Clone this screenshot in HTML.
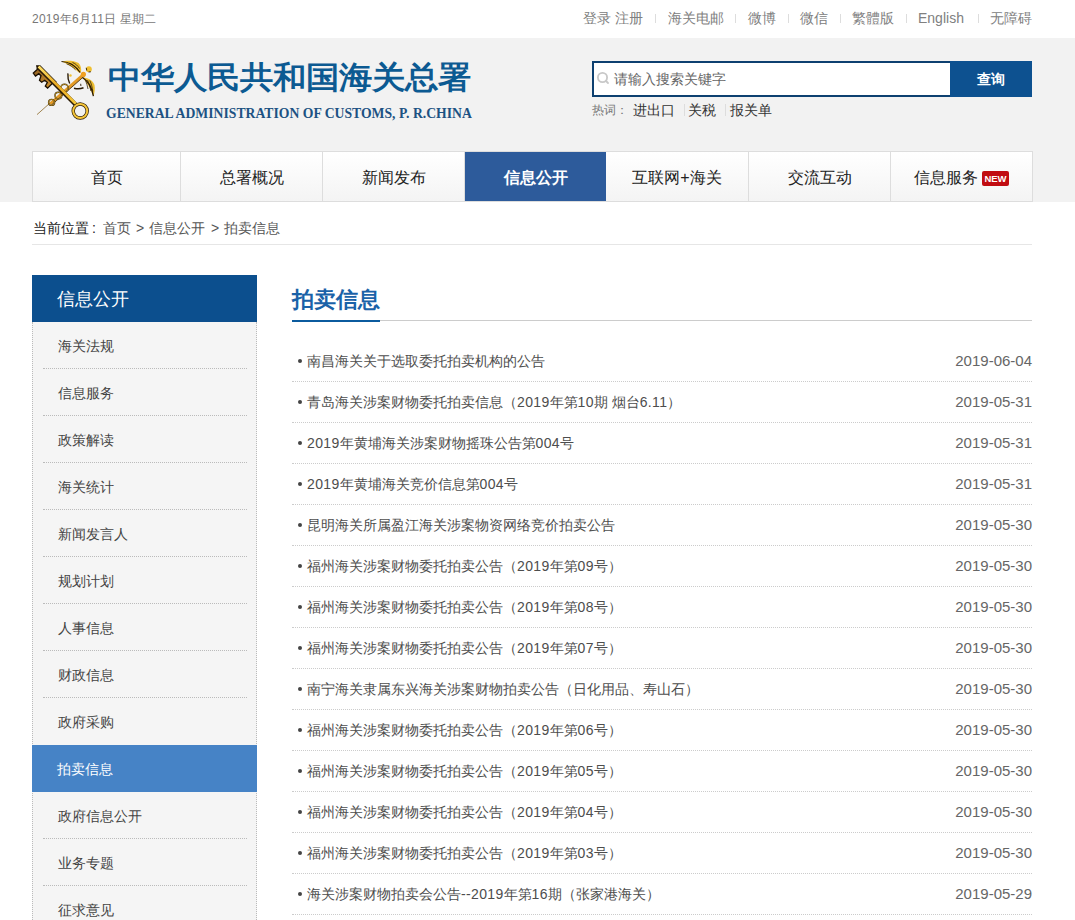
<!DOCTYPE html>
<html><head><meta charset="utf-8">
<style>
*{margin:0;padding:0;box-sizing:border-box}
html,body{width:1075px;height:920px;overflow:hidden;background:#fff}
body{font-family:"Liberation Sans",sans-serif;color:#333;position:relative}
.abs{position:absolute;white-space:nowrap}
#topbar{position:absolute;left:0;top:0;width:1075px;height:38px;background:#fff}
#date{left:32px;top:11px;letter-spacing:.25px;font-size:12px;color:#777;line-height:16px}
#toplinks{top:9px;font-size:14px;color:#808080;line-height:18px}
#toplinks span{position:absolute;white-space:nowrap}
#toplinks i{position:absolute;top:5px;width:1px;height:9px;background:#ddd}
#header{position:absolute;left:0;top:38px;width:1075px;height:164px;background:#f2f2f2}
#logo-cn{left:108px;top:20px;font-size:33px;font-weight:bold;color:#0c5a92;line-height:40px;letter-spacing:0px;transform-origin:0 23px;transform:scaleY(.93)}
#logo-en{left:106px;top:67px;font-family:"Liberation Serif",serif;font-weight:bold;font-size:15px;color:#1d5283;line-height:16px;transform-origin:0 0;transform:scaleX(0.9125)}
#search{left:592px;top:23px;width:358px;height:36px;border:2px solid #0d4070;border-right:none;background:#fff}
#btn{left:950px;top:23px;width:82px;height:36px;background:#0d5190;color:#fff;font-size:14px;font-weight:600;line-height:36px;text-align:center}
#ph{left:614px;top:32px;font-size:14px;color:#666;line-height:18px}
#hot{left:592px;top:64px;font-size:12px;color:#777;line-height:16px}
.hw{top:63px;font-size:14px;color:#333;line-height:18px}
#nav{position:absolute;left:32px;top:151px;width:1001px;height:51px;border:1px solid #ddd;background:linear-gradient(#fff,#f4f4f4)}
.ni{position:absolute;top:0;height:49px;line-height:51px;text-align:center;font-size:16px;color:#222}
.nd{position:absolute;top:0;width:1px;height:49px;background:#ddd}
.ni.on{background:#2d5b9b;color:#fff;font-weight:bold}
.crumb{top:219px;font-size:14px;color:#555;line-height:18px}
#crumbline{position:absolute;left:32px;top:244px;width:1000px;height:1px;background:#e6e6e6}
#side{position:absolute;left:32px;top:275px;width:225px;height:645px}
#sidehd{position:absolute;left:0;top:0;width:225px;height:47px;background:#0c4f8e;color:#fff;font-size:18px;line-height:49px;padding-left:25px}
#sidebody{position:absolute;left:0;top:47px;width:225px;height:700px;background:#f5f5f5;border-left:1px dotted #bbb;border-right:1px dotted #bbb}
.si{position:absolute;left:0;width:225px;height:47px;font-size:14px;color:#444;line-height:49px;padding-left:26px}
.si b{position:absolute;left:11px;right:10px;bottom:0;border-top:1px dotted #bbb;font-weight:normal}
.si.on{background:#4683c6;color:#fff;padding-left:25px}
#ctitle{left:292px;top:285px;font-size:22px;font-weight:bold;color:#1a62a8;line-height:30px}
#cline{position:absolute;left:292px;top:320px;width:740px;height:1px;background:#ccc}
#cbar{position:absolute;left:292px;top:320px;width:88px;height:2px;background:#0b5b9e}
.li{position:absolute;left:292px;width:740px;height:41px}
.li .t{position:absolute;left:15px;top:10px;font-size:14px;color:#4d4d4d;line-height:20px;white-space:nowrap}
.li .dot{position:absolute;left:6px;top:18px;width:4px;height:4px;border-radius:2px;background:#444}
.li .d{position:absolute;right:0;top:10px;font-size:15px;color:#666;line-height:20px}
.li .t s{text-decoration:none;letter-spacing:.35px}
.li .sep{position:absolute;left:0;right:0;bottom:0;border-top:1px dotted #ccc}
#new{left:949px;top:19px;width:27px;height:15px;background:#c10d12;border-radius:2px;color:#fff;font-size:9.5px;font-weight:bold;line-height:15px;text-align:center;letter-spacing:0}
#hotsep{}
</style></head><body>
<div id="topbar">
  <div id="date" class="abs">2019年6月11日 星期二</div>
  <div id="toplinks" class="abs" style="left:0;width:1075px;height:20px">
    <span style="left:583px">登录 注册</span><i style="left:655px"></i>
    <span style="left:668px">海关电邮</span><i style="left:735px"></i>
    <span style="left:748px">微博</span><i style="left:788px"></i>
    <span style="left:800px">微信</span><i style="left:840px"></i>
    <span style="left:852px">繁體版</span><i style="left:906px"></i>
    <span style="left:918px">English</span><i style="left:978px"></i>
    <span style="left:990px">无障碍</span>
  </div>
</div>
<div id="header">
  <svg class="abs" style="left:28px;top:18px" width="70" height="70" viewBox="28 56 70 70">
   <defs><linearGradient id="gd" x1="0" y1="0" x2="1" y2="1"><stop offset="0" stop-color="#ffe066"/><stop offset=".5" stop-color="#e8a820"/><stop offset="1" stop-color="#f5c93a"/></linearGradient>
   <linearGradient id="gb" x1="0" y1="0" x2="1" y2="1"><stop offset="0" stop-color="#8a5a20"/><stop offset="1" stop-color="#d89a30"/></linearGradient></defs>
   <line x1="37" y1="114.6" x2="50" y2="103" stroke="#a08450" stroke-width="1"/>
   <path d="M49,103 L83,73 L85,75.5 L51.5,105Z" fill="#e39a25"/>
   <path d="M51.5,105 L85,75.5" stroke="#3a2608" stroke-width=".8"/>
   <circle cx="51.6" cy="102.4" r="3" fill="none" stroke="#3a2608" stroke-width="1.4"/>
   <circle cx="51.6" cy="102.4" r="3" fill="none" stroke="#f0c030" stroke-width=".6"/>
   <circle cx="58.4" cy="95.6" r="3.4" fill="none" stroke="#3a2608" stroke-width="1.4"/>
   <circle cx="58.4" cy="95.6" r="3.4" fill="none" stroke="#f0c030" stroke-width=".6"/>
   <circle cx="64.5" cy="88" r="3.8" fill="none" stroke="#3a2608" stroke-width="1.4"/>
   <circle cx="64.5" cy="88" r="3.8" fill="none" stroke="#f0c030" stroke-width=".6"/>
   <path d="M67.9,73.4 Q67.5,79 69.7,83.5" fill="none" stroke="#2a1a05" stroke-width="1.4"/>
   <circle cx="70.5" cy="75.5" r="1.2" fill="#f0c030"/>
   <path d="M74,88.2 Q79,89.5 83.5,87.8" fill="none" stroke="#2a1a05" stroke-width="1.5"/>
   <path d="M80.7,83.8 L80.9,86" stroke="#2a1a05" stroke-width=".9"/>
   <path d="M61.5,61.5 C66,60.5 73,60 78.5,63 C81,65.5 81.5,69 81,72 L79.5,73 C76,69.5 70,65 61.5,61.5Z" fill="#ecbd30"/>
   <path d="M61.5,61.5 C68,61.8 75,65 80.2,72.5" fill="none" stroke="#2a1a05" stroke-width="1.2"/>
   <path d="M66.5,63.8 C70,65 73,67 75.5,69.8 M69.5,63 C73,64.5 76,67 78,70 M72.5,62.5 C75.5,63.5 78,66 79.5,68.5" fill="none" stroke="#2a1a05" stroke-width=".75"/>
   <path d="M82.5,77.5 C87,77.5 92.5,79.5 94.5,85 C95.3,89 94.5,93 93.4,96.2 C91.5,91 88.5,85 82.5,77.5Z" fill="#ecbd30"/>
   <path d="M82.5,77.5 C88,81 92,88 93.4,96.2" fill="none" stroke="#2a1a05" stroke-width="1.3"/>
   <path d="M85.5,80.3 C86.5,83 87.5,86 88,89 M87.5,80 C89,83 90.2,87 90.8,91 M89.8,80.5 C91.3,83.5 92.3,87.5 92.8,91.5" fill="none" stroke="#2a1a05" stroke-width=".75"/>
   <circle cx="88.9" cy="69.2" r="2.9" fill="#f0c030"/>
   <path d="M86.2,67.8 L86.8,70.5 M88.5,72 L90.8,71.8" stroke="#2a1a05" stroke-width=".9"/>
   <circle cx="83.4" cy="74.3" r="2.6" fill="#f0a020"/>
   <path d="M36.8,65.9 L37.5,69.2 L33.3,73.1 L35.5,76 L38.8,73.7 L41,75.7 L39.5,80.3 L41.7,82.2 L44.7,80.3 L47.3,82.5 L45.3,86.1 L47.6,88.1 L52.2,83.5 L56,82 L40,66 Z" fill="url(#gb)" stroke="#1a0f02" stroke-width="1.3"/>
   <line x1="38" y1="67" x2="75.5" y2="104.5" stroke="#2a1a05" stroke-width="4.2"/>
   <line x1="38.6" y1="66.5" x2="76" y2="104" stroke="url(#gd)" stroke-width="2.6"/>
   <circle cx="80.2" cy="111" r="7" fill="none" stroke="#2a1a05" stroke-width="3.4"/>
   <circle cx="80.2" cy="111" r="7" fill="none" stroke="#f4c53a" stroke-width="2"/>
  </svg>
  <div id="logo-cn" class="abs">中华人民共和国海关总署</div>
  <div id="logo-en" class="abs">GENERAL ADMINISTRATION OF CUSTOMS, P. R.CHINA</div>
  <div id="search" class="abs"></div>
  <div id="ph" class="abs">请输入搜索关键字</div>
  <svg class="abs" style="left:596px;top:33px" width="14" height="14" viewBox="0 0 14 14"><circle cx="6.5" cy="6.5" r="4.6" fill="none" stroke="#c8c8c8" stroke-width="1.8"/><line x1="10" y1="10" x2="12" y2="12" stroke="#c8c8c8" stroke-width="1.8" stroke-linecap="round"/></svg>
  <div id="btn" class="abs">查询</div>
  <div id="hot" class="abs">热词：</div>
  <div class="abs hw" style="left:633px">进出口</div>
  <div class="abs" style="left:684px;top:66px;width:1px;height:12px;background:#ddd"></div>
  <div class="abs hw" style="left:688px">关税</div>
  <div class="abs" style="left:725px;top:66px;width:1px;height:12px;background:#ddd"></div>
  <div class="abs hw" style="left:730px">报关单</div>
</div>
<div id="nav">
  <div class="ni" style="left:0;width:147px">首页</div>
  <i class="nd" style="left:147px"></i>
  <div class="ni" style="left:148px;width:141px">总署概况</div>
  <i class="nd" style="left:289px"></i>
  <div class="ni" style="left:290px;width:141px">新闻发布</div>
  <i class="nd" style="left:431px"></i>
  <div class="ni on" style="left:432px;width:141px">信息公开</div>
  <div class="ni" style="left:573px;width:142px">互联网+海关</div>
  <i class="nd" style="left:715px"></i>
  <div class="ni" style="left:716px;width:141px">交流互动</div>
  <i class="nd" style="left:857px"></i>
  <div class="abs" style="left:881px;top:0;font-size:16px;line-height:51px;color:#222">信息服务</div>
  <div class="abs" id="new">NEW</div>
</div>
<div class="abs crumb" style="left:33px;color:#222">当前位置</div>
<div class="abs crumb" style="left:92px;color:#222">:</div>
<div class="abs crumb" style="left:103px">首页</div>
<div class="abs crumb" style="left:136px">&gt;</div>
<div class="abs crumb" style="left:149px">信息公开</div>
<div class="abs crumb" style="left:211px">&gt;</div>
<div class="abs crumb" style="left:224px">拍卖信息</div>
<div id="crumbline"></div>
<div id="side">
  <div id="sidehd">信息公开</div>
  <div id="sidebody"></div>
  <div class="si" style="top:47px">海关法规<b></b></div>
  <div class="si" style="top:94px">信息服务<b></b></div>
  <div class="si" style="top:141px">政策解读<b></b></div>
  <div class="si" style="top:188px">海关统计<b></b></div>
  <div class="si" style="top:235px">新闻发言人<b></b></div>
  <div class="si" style="top:282px">规划计划<b></b></div>
  <div class="si" style="top:329px">人事信息<b></b></div>
  <div class="si" style="top:376px">财政信息<b></b></div>
  <div class="si" style="top:423px">政府采购</div>
  <div class="si on" style="top:470px">拍卖信息</div>
  <div class="si" style="top:517px">政府信息公开<b></b></div>
  <div class="si" style="top:564px">业务专题<b></b></div>
  <div class="si" style="top:611px">征求意见<b></b></div>
</div>
<div id="ctitle" class="abs">拍卖信息</div>
<div id="cline"></div><div id="cbar"></div>
<div class="li" style="top:341px"><i class="dot"></i><span class="t">南昌海关关于选取委托拍卖机构的公告</span><span class="d">2019-06-04</span><i class="sep"></i></div>
<div class="li" style="top:382px"><i class="dot"></i><span class="t">青岛海关涉案财物委托拍卖信息（<s>2019</s>年第<s>10</s>期 烟台<s>6.11</s>）</span><span class="d">2019-05-31</span><i class="sep"></i></div>
<div class="li" style="top:423px"><i class="dot"></i><span class="t"><s>2019</s>年黄埔海关涉案财物摇珠公告第<s>004</s>号</span><span class="d">2019-05-31</span><i class="sep"></i></div>
<div class="li" style="top:464px"><i class="dot"></i><span class="t"><s>2019</s>年黄埔海关竞价信息第<s>004</s>号</span><span class="d">2019-05-31</span><i class="sep"></i></div>
<div class="li" style="top:505px"><i class="dot"></i><span class="t">昆明海关所属盈江海关涉案物资网络竞价拍卖公告</span><span class="d">2019-05-30</span><i class="sep"></i></div>
<div class="li" style="top:546px"><i class="dot"></i><span class="t">福州海关涉案财物委托拍卖公告（<s>2019</s>年第<s>09</s>号）</span><span class="d">2019-05-30</span><i class="sep"></i></div>
<div class="li" style="top:587px"><i class="dot"></i><span class="t">福州海关涉案财物委托拍卖公告（<s>2019</s>年第<s>08</s>号）</span><span class="d">2019-05-30</span><i class="sep"></i></div>
<div class="li" style="top:628px"><i class="dot"></i><span class="t">福州海关涉案财物委托拍卖公告（<s>2019</s>年第<s>07</s>号）</span><span class="d">2019-05-30</span><i class="sep"></i></div>
<div class="li" style="top:669px"><i class="dot"></i><span class="t">南宁海关隶属东兴海关涉案财物拍卖公告（日化用品、寿山石）</span><span class="d">2019-05-30</span><i class="sep"></i></div>
<div class="li" style="top:710px"><i class="dot"></i><span class="t">福州海关涉案财物委托拍卖公告（<s>2019</s>年第<s>06</s>号）</span><span class="d">2019-05-30</span><i class="sep"></i></div>
<div class="li" style="top:751px"><i class="dot"></i><span class="t">福州海关涉案财物委托拍卖公告（<s>2019</s>年第<s>05</s>号）</span><span class="d">2019-05-30</span><i class="sep"></i></div>
<div class="li" style="top:792px"><i class="dot"></i><span class="t">福州海关涉案财物委托拍卖公告（<s>2019</s>年第<s>04</s>号）</span><span class="d">2019-05-30</span><i class="sep"></i></div>
<div class="li" style="top:833px"><i class="dot"></i><span class="t">福州海关涉案财物委托拍卖公告（<s>2019</s>年第<s>03</s>号）</span><span class="d">2019-05-30</span><i class="sep"></i></div>
<div class="li" style="top:874px"><i class="dot"></i><span class="t">海关涉案财物拍卖会公告<s>--2019</s>年第<s>16</s>期（张家港海关）</span><span class="d">2019-05-29</span><i class="sep"></i></div>
</body></html>
